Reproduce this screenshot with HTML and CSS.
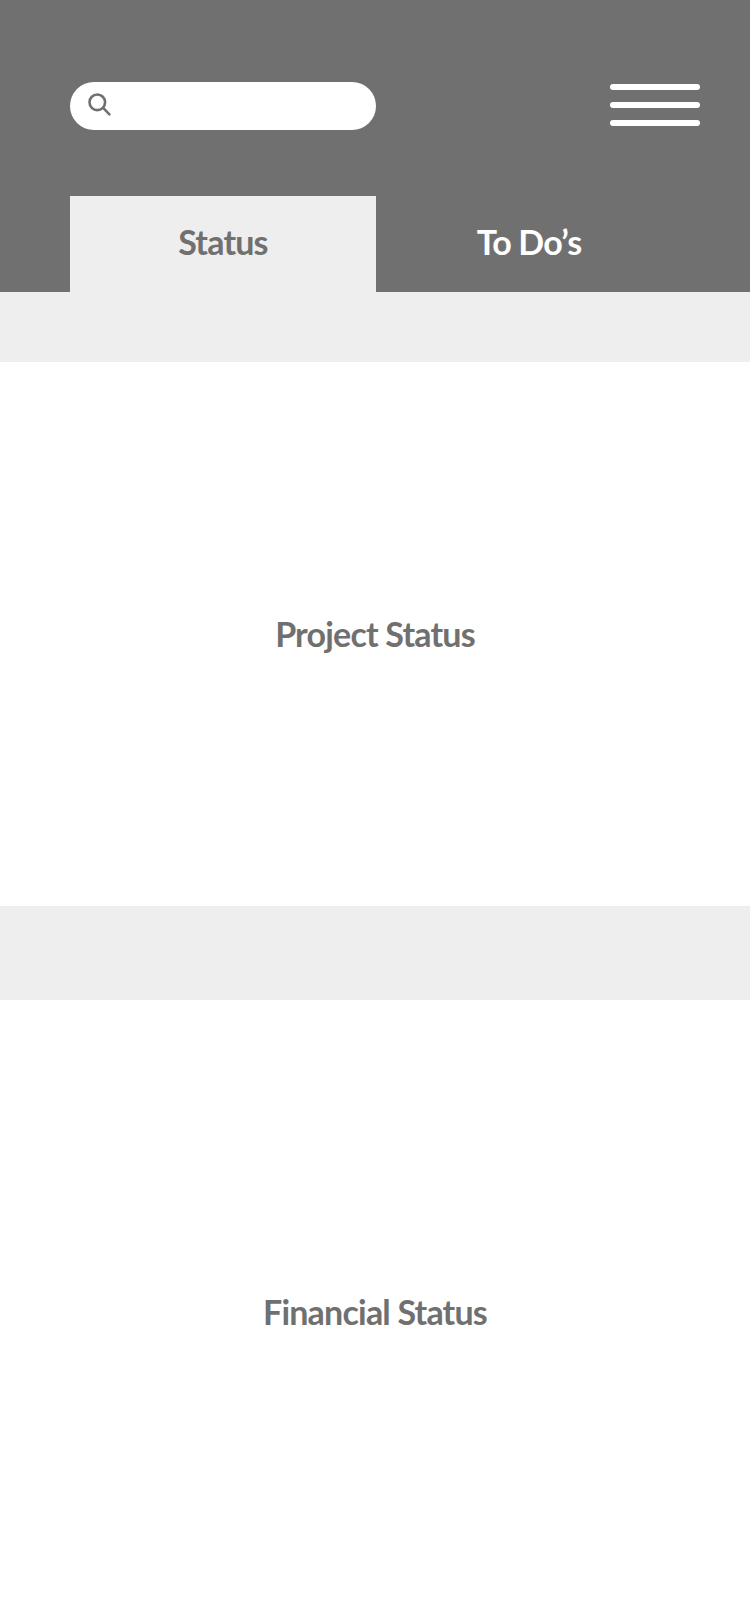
FILE: index.html
```html
<!DOCTYPE html>
<html lang="en">
<head>
    <meta charset="UTF-8">
    <meta name="viewport" content="width=device-width, initial-scale=1.0">
    <title>Project Dashboard</title>
    <link rel="stylesheet" href="styles.css">
</head>
<body>
    <header class="header">
        <div class="top-row">
            <div class="search">
                <svg class="search-icon" width="26" height="26" viewBox="0 0 26 26" fill="none" stroke="#707070" stroke-width="2.6">
                    <circle cx="11.3" cy="10.3" r="7.8"/>
                    <path d="M17.2 15.9l6.2 6.4" stroke-linecap="round"/>
                </svg>
            </div>
            <div class="menu">
                <span class="menu-bar"></span>
                <span class="menu-bar"></span>
                <span class="menu-bar"></span>
            </div>
        </div>
        <nav class="tabs">
            <div class="tab active">Status</div>
            <div class="tab">To Do’s</div>
        </nav>
    </header>

    <div class="spacer spacer-top"></div>
    <section class="panel panel-project"><h2>Project Status</h2></section>
    <div class="spacer spacer-mid"></div>
    <section class="panel panel-financial"><h2>Financial Status</h2></section>
</body>
</html>
```

FILE: styles.css
```css
* {
    box-sizing: border-box;
}
body {
    font-family: 'Lato', sans-serif;
    font-weight: 700;
    background-color: #fff;
    color: #707070;
    margin: 0;
    height: 1624px;
    display: flex;
    flex-direction: column;
}
.header {
    background-color: #707070;
    height: 292px;
    padding: 82px 50px 0 70px;
}
.top-row {
    display: flex;
    justify-content: space-between;
    align-items: flex-start;
    height: 48px;
}
.search {
    width: 306px;
    height: 48px;
    background-color: #fff;
    border-radius: 24px;
    display: flex;
    align-items: center;
    padding-left: 16px;
}
.search-icon {
    margin-top: -2px;
}
.menu {
    width: 90px;
    padding-top: 2px;
    display: flex;
    flex-direction: column;
    gap: 12px;
}
.menu-bar {
    display: block;
    height: 6px;
    background-color: #fff;
    border-radius: 3px;
}
.tabs {
    display: flex;
    margin-top: 66px;
}
.tab {
    width: 306px;
    height: 96px;
    padding-bottom: 6px;
    display: flex;
    align-items: center;
    justify-content: center;
    color: #fff;
    font-size: 34px;
    letter-spacing: -0.8px;
}
.tab.active {
    background-color: #eee;
    color: #707070;
}
.spacer {
    background-color: #eee;
}
.spacer-top {
    height: 70px;
}
.spacer-mid {
    height: 94px;
}
.panel {
    display: flex;
    align-items: center;
    justify-content: center;
    padding-bottom: 2px;
}
.panel h2 {
    margin: 0;
    font-size: 34px;
    font-weight: 700;
    letter-spacing: -0.8px;
}
.panel-project {
    height: 544px;
}
.panel-financial {
    flex: 1;
}
```
